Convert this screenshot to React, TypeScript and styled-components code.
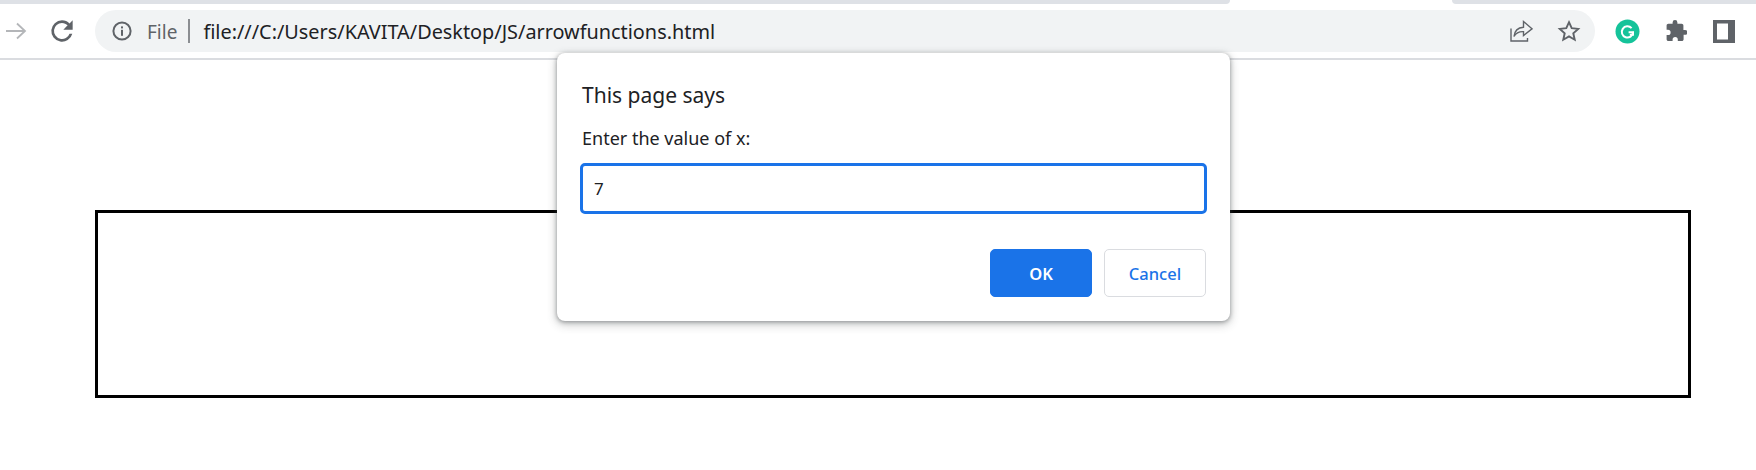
import styled, { createGlobalStyle } from "styled-components";

const GlobalStyle = createGlobalStyle`
  html, body {
    margin: 0;
    padding: 0;
    background: #fff;
    font-family: "Noto Sans", "Open Sans", sans-serif;
  }
`;

const App = () => {
  return (
    <Page>
      <GlobalStyle />
      <TabStrip>
        <InactiveTabs $side="left" />
        <ActiveTab />
        <InactiveTabs $side="right" />
      </TabStrip>
      <Toolbar>
        <NavButton $width={29} $left={0}>
          <svg width="24" height="24" viewBox="0 0 24 24" fill="none" stroke="#b4b6b9" strokeWidth="1.8">
            <path d="M3 12h19M14 4.5l8 7.5-8 7.5" />
          </svg>
        </NavButton>
        <NavButton $width={32} $left={17}>
          <svg width="32" height="32" viewBox="0 0 24 24" fill="#5f6368">
            <path d="M17.65 6.35A7.95 7.95 0 0 0 12 4a8 8 0 1 0 7.73 10h-2.08A6 6 0 1 1 12 6c1.66 0 3.14.69 4.22 1.78L13 11h7V4l-2.35 2.35z" />
          </svg>
        </NavButton>
        <Omnibox>
          <svg width="22" height="22" viewBox="0 0 22 22" fill="none">
            <circle cx="11" cy="11" r="8.6" stroke="#5f6368" strokeWidth="2" />
            <rect x="10" y="9.8" width="2" height="6" fill="#5f6368" />
            <rect x="10" y="6.4" width="2" height="2" fill="#5f6368" />
          </svg>
          <Scheme>File</Scheme>
          <Divider />
          <Url>file:///C:/Users/KAVITA/Desktop/JS/arrowfunctions.html</Url>
          <OmniActions>
            <svg width="24" height="24" viewBox="0 0 24 24" fill="none" stroke="#5f6368" strokeWidth="1.4">
              <path d="M2 9.5V22h16.5v-3" />
              <path d="M14.5 2.5 23 9.8l-8.5 6.7v-3.900c-4.500-.2-7.600 1.300-9.500 4.900.5-5.400 3.800-8.900 9.500-9.300z" />
            </svg>
            <svg width="24" height="24" viewBox="0 0 24 24" fill="none" stroke="#5f6368" strokeWidth="1.9">
              <path d="M12 3.2l2.700 6 6.500.7-4.900 4.400 1.400 6.400L12 17.400l-5.700 3.300 1.400-6.400-4.900-4.400 6.500-.7z" />
            </svg>
          </OmniActions>
        </Omnibox>
        <Extensions>
          <svg width="25" height="25" viewBox="0 0 25 25" fill="none">
            <circle cx="12.5" cy="12.5" r="12" fill="#15c39a" />
            <path d="M16.600 9.200a5.600 5.600 0 1 0 1.400 4.100h-4.400" stroke="#fff" strokeWidth="2" />
            <path d="M14.800 15.600l3.400.2v-3" stroke="#fff" strokeWidth="1.600" />
          </svg>
          <svg width="22" height="22" viewBox="0 0 22 22" fill="#5f6368">
            <path d="M20 10h-1.600V5.600c0-1-.8-1.800-1.800-1.800h-4.200V2.400a2.400 2.400 0 0 0-4.800 0v1.400H3.400c-1 0-1.800.8-1.800 1.800v4.200H3a2.600 2.600 0 0 1 0 5.200H1.600v4.200c0 1 .8 1.800 1.800 1.800h4.200V19.500a2.600 2.600 0 0 1 5.200 0V21h4c1 0 1.800-.8 1.800-1.800v-4.400H20a2.400 2.400 0 0 0 0-4.800z" />
          </svg>
          <svg width="23" height="23" viewBox="0 0 23 23" fill="none">
            <rect x="1" y="0" width="22" height="23" fill="#5f6368" />
            <rect x="5" y="3.500" width="11" height="16" fill="#fff" />
          </svg>
        </Extensions>
      </Toolbar>
      <OutlineBox />
      <Dialog>
        <DialogTitle>This page says</DialogTitle>
        <DialogMessage>Enter the value of x:</DialogMessage>
        <PromptInput>7</PromptInput>
        <DialogButtons>
          <DialogButton $primary>OK</DialogButton>
          <DialogButton>Cancel</DialogButton>
        </DialogButtons>
      </Dialog>
    </Page>
  );
};

export default App;

const Page = styled.div`
  position: relative;
  width: 1756px;
  height: 470px;
  overflow: hidden;
  background: #fff;
`;

const TabStrip = styled.div`
  display: flex;
  height: 4px;
  background: #fff;
`;

const InactiveTabs = styled.div<{ $side: "left" | "right" }>`
  flex: ${(p) => (p.$side === "left" ? "0 0 1230px" : "1")};
  background: #dee1e6;
  border-bottom-${(p) => (p.$side === "left" ? "right" : "left")}-radius: 4px;
`;

const ActiveTab = styled.div`
  flex: 0 0 222px;
  background: #fff;
`;

const Toolbar = styled.div`
  display: flex;
  align-items: center;
  height: 54px;
  border-bottom: 2px solid #dadce0;
`;

const NavButton = styled.div<{ $width: number; $left: number }>`
  display: flex;
  align-items: center;
  justify-content: center;
  width: ${(p) => p.$width}px;
  margin-left: ${(p) => p.$left}px;
`;

const Omnibox = styled.div`
  display: flex;
  align-items: center;
  width: 1500px;
  height: 42px;
  margin-left: 17px;
  padding: 0 14px 0 16px;
  box-sizing: border-box;
  border-radius: 21px;
  background: #f1f3f4;
`;

const Scheme = styled.span`
  margin-left: 14px;
  padding-top: 1px;
  font-size: 19px;
  color: #5f6368;
`;

const Divider = styled.span`
  width: 2px;
  height: 24px;
  margin-left: 11px;
  background: #8b8e92;
`;

const Url = styled.span`
  margin-left: 13px;
  padding-top: 1px;
  font-size: 19.85px;
  color: #202124;
  white-space: nowrap;
`;

const OmniActions = styled.div`
  display: flex;
  align-items: center;
  gap: 24px;
  margin-left: auto;
`;

const Extensions = styled.div`
  display: flex;
  align-items: center;
  gap: 25px;
  margin-left: 20px;
`;

const OutlineBox = styled.div`
  box-sizing: border-box;
  width: 1596px;
  height: 188px;
  margin: 150px 0 0 95px;
  border: 3px solid #000;
`;

const Dialog = styled.div`
  position: absolute;
  top: 53px;
  left: 557px;
  box-sizing: border-box;
  width: 673px;
  height: 268px;
  padding: 28px 23px 0 23px;
  border-radius: 8px;
  background: #fff;
  box-shadow: 0 1px 4px rgba(60, 64, 67, 0.5), 0 3px 8px 2px rgba(60, 64, 67, 0.2);
`;

const DialogTitle = styled.div`
  padding-left: 2px;
  font-size: 21px;
  line-height: 28px;
  color: #202124;
`;

const DialogMessage = styled.div`
  margin-top: 17px;
  padding-left: 2px;
  font-size: 18px;
  line-height: 24px;
  color: #202124;
`;

const PromptInput = styled.div`
  box-sizing: border-box;
  display: flex;
  align-items: center;
  height: 51px;
  margin-top: 13px;
  padding-left: 11px;
  border: 3px solid #1a73e8;
  border-radius: 5px;
  font-size: 17px;
  color: #202124;
`;

const DialogButtons = styled.div`
  display: flex;
  justify-content: flex-end;
  gap: 12px;
  margin: 35px 1px 0 0;
`;

const DialogButton = styled.div<{ $primary?: boolean }>`
  box-sizing: border-box;
  display: flex;
  align-items: center;
  justify-content: center;
  width: 102px;
  height: 48px;
  border-radius: 5px;
  border: 1px solid ${(p) => (p.$primary ? "#1a73e8" : "#dadce0")};
  background: ${(p) => (p.$primary ? "#1a73e8" : "#fff")};
  color: ${(p) => (p.$primary ? "#fff" : "#1a73e8")};
  font-size: 16.5px;
  font-weight: ${(p) => (p.$primary ? 600 : 500)};
`;
